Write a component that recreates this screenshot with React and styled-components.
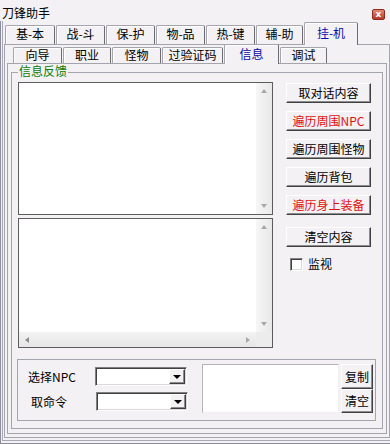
import React from "react";
import styled, { createGlobalStyle } from "styled-components";

const FONT = `"Noto Sans CJK SC", "Noto Sans", sans-serif`;
const BG = "#f4f1f4";
const LINE = "#a4a4ac";

const GlobalStyle = createGlobalStyle`
  html, body { margin: 0; padding: 0; background: ${BG}; }
  * { box-sizing: border-box; }
`;

// --- Window chrome ---
const Window = styled.div`
  width: 390px;
  height: 444px;
  display: flex;
  flex-direction: column;
  background: ${BG};
  font: 12px/14px ${FONT};
  color: #000;
  overflow: hidden;
`;

const TitleBar = styled.div`
  height: 21px;
  flex: none;
  display: flex;
  align-items: center;
  justify-content: space-between;
  padding: 5px 5px 0 2px;
`;

const Title = styled.span`
  font-size: 12px;
  line-height: 14px;
`;

const CloseButton = styled.div`
  width: 13px;
  height: 11px;
  margin-top: 2px;
  border: 1px solid #8a2a20;
  border-radius: 2px;
  background: linear-gradient(#e48a70, #b53a2a);
  color: #fff;
  font: bold 9px/9px "DejaVu Sans", sans-serif;
  text-align: center;
`;

const Body = styled.div`
  flex: 1;
  display: flex;
  flex-direction: column;
  border-left: 1px solid #8c8c9c;
  border-bottom: 1px solid #8c8c9c;
  box-shadow: inset 1px -2px 0 ${BG}, inset 2px -3px 0 #a8a8b4;
  padding: 0 0 5px 3px;
`;

// --- Tabs ---
const TabRow = styled.div`
  flex: none;
  height: ${(p) => p.$h}px;
  display: flex;
  align-items: flex-end;
  gap: 1px;
  padding-left: ${(p) => p.$pad}px;
  position: relative;
  z-index: 1;
`;

const Tab = styled.div`
  width: ${(p) => p.$w}px;
  height: ${(p) => (p.$active ? p.$h + 4 : p.$h)}px;
  margin-bottom: ${(p) => (p.$active ? -1 : 0)}px;
  padding-top: ${(p) => (p.$active ? 2 : 0)}px;
  border: 1px solid ${LINE};
  border-right-color: #6c6c74;
  border-bottom: none;
  border-radius: 2px 2px 0 0;
  box-shadow: inset 1px 1px 0 #fff;
  background: ${BG};
  color: ${(p) => (p.$active ? "#0a0aa8" : "#000")};
  text-align: center;
  line-height: ${(p) => p.$lh}px;
  white-space: nowrap;
`;

const Panel = styled.div`
  flex: 1;
  display: flex;
  flex-direction: column;
  border: 1px solid ${LINE};
  padding: ${(p) => p.$pad};
`;

// --- Group box ---
const Group = styled.div`
  flex: 1;
  margin-top: 8px;
  border: 1px solid ${LINE};
  position: relative;
  padding: 9px 0 0 6px;
  display: flex;
  flex-direction: column;
`;

const Legend = styled.span`
  position: absolute;
  top: -9px;
  left: 6px;
  padding: 0 1px;
  background: ${BG};
  color: #0a800a;
  line-height: 14px;
`;

const TopSection = styled.div`
  display: flex;
  gap: 13px;
`;

const TextColumn = styled.div`
  width: 255px;
  display: flex;
  flex-direction: column;
  gap: 3px;
`;

const TextBox = styled.div`
  height: ${(p) => p.$h}px;
  border: 1px solid #5c5c5c;
  background: #fff;
  display: grid;
  grid-template-columns: 1fr 16px;
  grid-template-rows: ${(p) => (p.$hscroll ? "1fr 15px" : "1fr")};
`;

const VScroll = styled.div`
  background: linear-gradient(to right, #f6f6f6, #e8e8e8);
  display: flex;
  flex-direction: column;
  justify-content: space-between;
  align-items: center;
  padding: 6px 0 6px;
`;

const HScroll = styled.div`
  background: linear-gradient(#f2f2f2, #e6e6e6);
  display: flex;
  justify-content: space-between;
  align-items: center;
  padding: 0 6px;
`;

const Corner = styled.div`
  background: #ececec;
`;

const Arrow = styled.span`
  width: 0;
  height: 0;
  border: 3px solid transparent;
  ${(p) =>
    ({
      up: "border-bottom: 4px solid #a8a8a8; border-top-width: 0;",
      down: "border-top: 4px solid #a8a8a8; border-bottom-width: 0;",
      left: "border-right: 4px solid #8c8c8c; border-left-width: 0;",
      right: "border-left: 4px solid #a8a8a8; border-right-width: 0;",
    }[p.$dir])}
`;

// --- Right button column ---
const ButtonColumn = styled.div`
  width: 85px;
  padding-top: 1px;
  display: flex;
  flex-direction: column;
`;

const Button = styled.button`
  width: ${(p) => p.$w || 85}px;
  height: ${(p) => p.$h || 20}px;
  margin-top: ${(p) => p.$mt || 0}px;
  padding: 0;
  font: 12px/14px ${FONT};
  color: ${(p) => (p.$red ? "#e01010" : "#000")};
  background: #f3f1f3;
  border: 1px solid;
  border-color: #fff #404040 #404040 #fff;
  box-shadow: inset -1px -1px 0 #8c8c8c;
  white-space: nowrap;
`;

const CheckRow = styled.label`
  display: flex;
  align-items: center;
  gap: 5px;
  margin: 10px 0 0 4px;
`;

const CheckBox = styled.span`
  width: 13px;
  height: 13px;
  background: #fff;
  border: 1px solid;
  border-color: #808080 #fff #fff #808080;
  box-shadow: inset 1px 1px 0 #404040, inset -1px -1px 0 #dcd8dc;
`;

// --- Bottom group ---
const BottomGroup = styled.div`
  width: 359px;
  height: 62px;
  margin: 11px 0 0 -1px;
  border: 1px solid ${LINE};
  padding-top: 4px;
  display: flex;
  align-items: flex-start;
`;

const Selectors = styled.div`
  margin: 3px 0 0 10px;
  display: grid;
  grid-template-columns: 67px 92px;
  row-gap: 6px;
  align-items: center;
`;

const Label = styled.span`
  padding-left: ${(p) => p.$indent || 0}px;
`;

const Combo = styled.div`
  width: 92px;
  height: 19px;
  margin-left: ${(p) => p.$shift || 0}px;
  background: #fff;
  border: 1px solid;
  border-color: #808080 #fff #fff #808080;
  box-shadow: inset 1px 1px 0 #404040, inset -1px -1px 0 #dcd8dc;
  display: flex;
  justify-content: flex-end;
  padding: 1px;
`;

const DropButton = styled.div`
  width: 16px;
  height: 100%;
  background: #f3f1f3;
  border: 1px solid;
  border-color: #fff #404040 #404040 #fff;
  box-shadow: inset -1px -1px 0 #8c8c8c;
  display: flex;
  align-items: center;
  justify-content: center;

  &::after {
    content: "";
    border-left: 4px solid transparent;
    border-right: 4px solid transparent;
    border-top: 4px solid #000;
  }
`;

const Memo = styled.div`
  width: 137px;
  height: 49px;
  margin-left: 15px;
  background: #fff;
  border: 1px solid;
  border-color: #b4b4b4 #f0f0f0 #f0f0f0 #b4b4b4;
`;

const SideButtons = styled.div`
  margin-left: 2px;
  display: flex;
  flex-direction: column;
`;

const topTabs = [
  ["基-本", 50],
  ["战-斗", 49],
  ["保-护", 49],
  ["物-品", 49],
  ["热-键", 49],
  ["辅-助", 47],
  ["挂-机", 54, true],
];

const subTabs = [
  ["向导", 49],
  ["职业", 48],
  ["怪物", 49],
  ["过验证码", 61],
  ["信息", 55, true],
  ["调试", 47],
];

const actions = [
  ["取对话内容"],
  ["遍历周围NPC", true],
  ["遍历周围怪物"],
  ["遍历背包"],
  ["遍历身上装备", true],
];

export default function App() {
  return (
    <Window>
      <GlobalStyle />
      <TitleBar>
        <Title>刀锋助手</Title>
        <CloseButton>x</CloseButton>
      </TitleBar>
      <Body>
        <TabRow $h={23} $pad={1}>
          {topTabs.map(([label, w, active]) => (
            <Tab key={label} $w={w} $h={19} $lh={16} $active={active}>
              {label}
            </Tab>
          ))}
        </TabRow>
        <Panel $pad="0 2px 3px 2px">
          <TabRow $h={18} $pad={6}>
            {subTabs.map(([label, w, active]) => (
              <Tab key={label} $w={w} $h={16} $lh={14} $active={active}>
                {label}
              </Tab>
            ))}
          </TabRow>
          <Panel $pad="0 3px 4px 3px">
            <Group>
              <Legend>信息反馈</Legend>
              <TopSection>
                <TextColumn>
                  <TextBox $h={133}>
                    <div />
                    <VScroll>
                      <Arrow $dir="up" />
                      <Arrow $dir="down" />
                    </VScroll>
                  </TextBox>
                  <TextBox $h={130} $hscroll>
                    <div />
                    <VScroll>
                      <Arrow $dir="up" />
                      <Arrow $dir="down" />
                    </VScroll>
                    <HScroll>
                      <Arrow $dir="left" />
                      <Arrow $dir="right" />
                    </HScroll>
                    <Corner />
                  </TextBox>
                </TextColumn>
                <ButtonColumn>
                  {actions.map(([label, red], i) => (
                    <Button key={label} $red={red} $mt={i ? 8 : 0}>
                      {label}
                    </Button>
                  ))}
                  <Button $mt={12}>清空内容</Button>
                  <CheckRow>
                    <CheckBox />
                    监视
                  </CheckRow>
                </ButtonColumn>
              </TopSection>
              <BottomGroup>
                <Selectors>
                  <Label>选择NPC</Label>
                  <Combo>
                    <DropButton />
                  </Combo>
                  <Label $indent={3}>取命令</Label>
                  <Combo $shift={1}>
                    <DropButton />
                  </Combo>
                </Selectors>
                <Memo />
                <SideButtons>
                  <Button $w={32} $h={25}>复制</Button>
                  <Button $w={32} $h={24}>清空</Button>
                </SideButtons>
              </BottomGroup>
            </Group>
          </Panel>
        </Panel>
      </Body>
    </Window>
  );
}
